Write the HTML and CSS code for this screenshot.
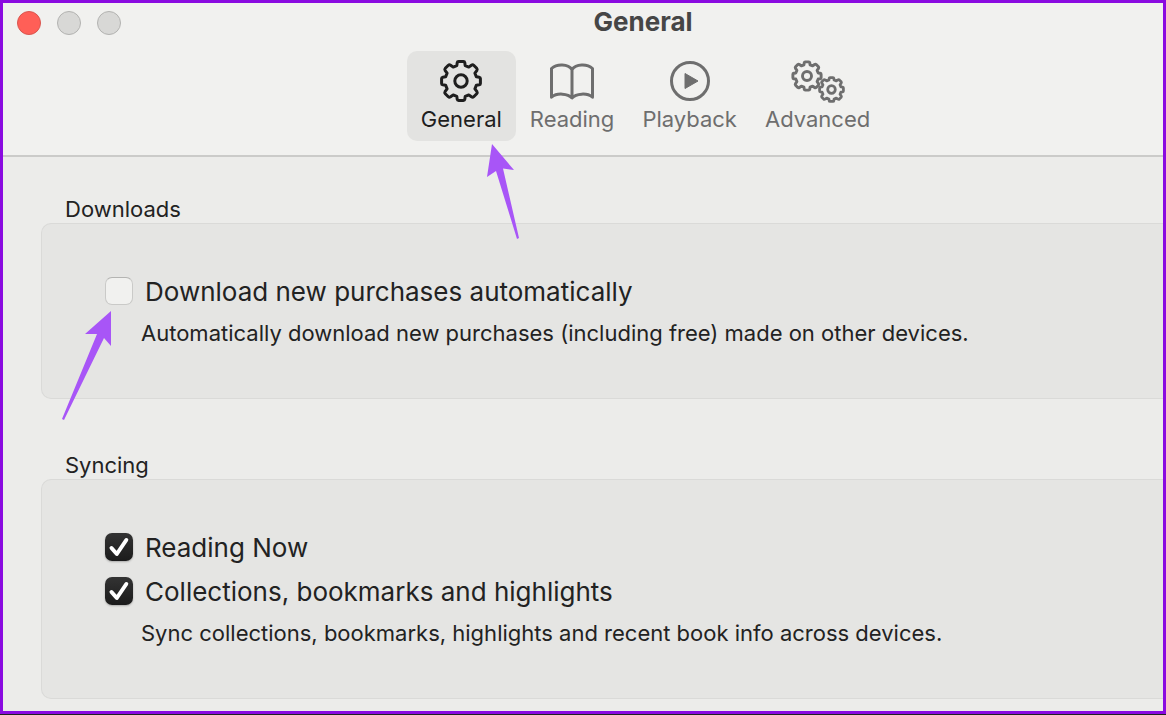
FILE: index.html
```
<!DOCTYPE html>
<html lang="en">
<head>
    <meta charset="UTF-8">
    <meta name="viewport" content="width=device-width, initial-scale=1.0">
    <title>General</title>
    <link rel="stylesheet" href="styles.css">
</head>
<body>
    <!-- Shared shapes -->
    <svg class="defs" aria-hidden="true">
        <symbol id="gear" viewBox="-22 -22 44 44">
            <path d="M-2.4 -19.4H2.4Q3.6 -19.4 3.8 -18.2L4.2 -15.4L7.8 -13.9L10.4 -15.8Q11.7 -16.6 12.7 -15.7L15.7 -12.7Q16.6 -11.7 15.8 -10.4L13.9 -7.8L15.4 -4.2L18.2 -3.8Q19.4 -3.6 19.4 -2.4V2.4Q19.4 3.6 18.2 3.8L15.4 4.2L13.9 7.8L15.8 10.4Q16.6 11.7 15.7 12.7L12.7 15.7Q11.7 16.6 10.4 15.8L7.8 13.9L4.2 15.4L3.8 18.2Q3.6 19.4 2.4 19.4H-2.4Q-3.6 19.4 -3.8 18.2L-4.2 15.4L-7.8 13.9L-10.4 15.8Q-11.7 16.6 -12.7 15.7L-15.7 12.7Q-16.6 11.7 -15.8 10.4L-13.9 7.8L-15.4 4.2L-18.2 3.8Q-19.4 3.6 -19.4 2.4V-2.4Q-19.4 -3.6 -18.2 -3.8L-15.4 -4.2L-13.9 -7.8L-15.8 -10.4Q-16.6 -11.7 -15.7 -12.7L-12.7 -15.7Q-11.7 -16.6 -10.4 -15.8L-7.8 -13.9L-4.2 -15.4L-3.8 -18.2Q-3.6 -19.4 -2.4 -19.4Z"/>
            <circle r="6.2"/>
        </symbol>
        <symbol id="tick" viewBox="0 0 28 28">
            <path d="M6.5 15L11.8 21L21.3 7"/>
        </symbol>
    </svg>

    <div class="window">
        <header class="toolbar">
            <div class="title-bar">
                <div class="lights">
                    <button class="light close" aria-label="Close"></button>
                    <button class="light" aria-label="Minimize"></button>
                    <button class="light" aria-label="Zoom"></button>
                </div>
                <h1>General</h1>
            </div>
            <nav class="tabs">
                <button class="tab active">
                    <svg class="icon" viewBox="0 0 44 44"><use href="#gear" width="44" height="44"/></svg>
                    General
                </button>
                <button class="tab">
                    <svg class="icon" viewBox="0 0 44 44">
                        <path d="M22 39C18 34.5 7 33.5 1.5 38.2V9.5C7 4.5 18 5 22 10.5C26 5 37 4.5 42.5 9.5V38.2C37 33.5 26 34.5 22 39ZM22 10.5V38"/>
                    </svg>
                    Reading
                </button>
                <button class="tab">
                    <svg class="icon" viewBox="0 0 44 44">
                        <circle cx="22" cy="22" r="18.5"/>
                        <path class="solid" d="M17 14.5V29.5L30 22Z"/>
                    </svg>
                    Playback
                </button>
                <button class="tab">
                    <svg class="icon wide" viewBox="0 0 56 44">
                        <use class="big" href="#gear" x="1" y="1" width="32" height="32"/>
                        <use class="small" href="#gear" x="28" y="17" width="27" height="27"/>
                    </svg>
                    Advanced
                </button>
            </nav>
        </header>

        <main>
            <section>
                <h2>Downloads</h2>
                <div class="panel">
                    <label class="option">
                        <span class="box">
                            <input type="checkbox" aria-describedby="download-note">
                            <svg class="tick"><use href="#tick"/></svg>
                        </span>
                        Download new purchases automatically
                    </label>
                    <p id="download-note">Automatically download new purchases (including free) made on other devices.</p>
                </div>
            </section>

            <section>
                <h2>Syncing</h2>
                <div class="panel">
                    <label class="option">
                        <span class="box">
                            <input type="checkbox" checked>
                            <svg class="tick"><use href="#tick"/></svg>
                        </span>
                        Reading Now
                    </label>
                    <label class="option">
                        <span class="box">
                            <input type="checkbox" aria-describedby="sync-note" checked>
                            <svg class="tick"><use href="#tick"/></svg>
                        </span>
                        Collections, bookmarks and highlights
                    </label>
                    <p id="sync-note">Sync collections, bookmarks, highlights and recent book info across devices.</p>
                </div>
            </section>
        </main>

        <!-- Pointer arrows -->
        <svg class="arrow arrow-tab" viewBox="0 0 34 96" aria-hidden="true">
            <path d="M6 0L28 26L17 24.5L33 94L31 95L10 27L1 33Z"/>
        </svg>
        <svg class="arrow arrow-check" viewBox="0 0 50 110" aria-hidden="true">
            <path d="M49 0V35L42 27L2 109L0 108L35 23L23 23Z"/>
        </svg>
    </div>
</body>
</html>
```

FILE: styles.css
```
* {
    box-sizing: border-box;
}
body {
    margin: 0;
    background: #222;
    color: #222;
    font-family: Inter, "Liberation Sans", sans-serif;
}
h1, h2, p {
    margin: 0;
}
button {
    border: none;
    padding: 0;
    background: none;
    font-family: inherit;
}
.defs {
    display: none;
}
.window {
    position: relative;
    min-height: calc(100vh - 1px);
    border: 3px solid #8a0ae0;
    background: #ececea;
}

/* Toolbar */
.toolbar {
    background: #f1f1ef;
    border-bottom: 2px solid #cbcbc9;
    padding-bottom: 14px;
}
.title-bar {
    display: grid;
    grid-template-columns: 120px 1fr;
    align-items: center;
    height: 40px;
}
.title-bar h1 {
    padding-bottom: 2px;
    font-size: 26px;
    line-height: 38px;
    text-align: center;
    color: #464646;
}
.lights {
    display: flex;
    gap: 16px;
    padding-left: 14px;
}
.light {
    width: 24px;
    height: 24px;
    border: 1px solid #b3b3b1;
    border-radius: 50%;
    background: #d8d8d6;
}
.light.close {
    background: #ff5f57;
    border-color: #d9564f;
}
.tabs {
    display: flex;
    justify-content: center;
    padding: 8px 0 0 125px;
}
.tab {
    display: flex;
    flex-direction: column;
    align-items: center;
    height: 90px;
    padding: 8px 14px;
    border-radius: 10px;
    font-size: 22px;
    line-height: 28px;
    color: #6e6e6e;
}
.tab.active {
    background: #e3e3e1;
    color: #1e1e1e;
}
.icon {
    width: 44px;
    height: 44px;
    margin-bottom: 2px;
    fill: none;
    stroke: currentColor;
    stroke-width: 3;
    stroke-linejoin: round;
}
.icon.wide {
    width: 56px;
}
.big {
    stroke-width: 4;
}
.small {
    stroke-width: 4.5;
}
.solid {
    fill: currentColor;
    stroke-width: 1;
}

/* Settings groups */
main {
    display: flex;
    flex-direction: column;
    gap: 52px;
    padding: 38px 0 12px 38px;
}
h2 {
    padding-left: 24px;
    font-size: 22px;
    font-weight: 400;
    line-height: 28px;
}
.panel {
    padding: 45px 0 51px 63px;
    border: 1px solid #dadad8;
    border-right: none;
    border-radius: 10px 0 0 10px;
    background: #e5e5e3;
}
.option {
    display: flex;
    align-items: center;
    gap: 12px;
    height: 44px;
    font-size: 26px;
}
.panel p {
    margin-top: 6px;
    padding-left: 36px;
    font-size: 22px;
    line-height: 28px;
}
.box {
    position: relative;
    width: 28px;
    height: 28px;
}
.box input {
    display: block;
    appearance: none;
    width: 28px;
    height: 28px;
    margin: 0;
    border: 1px solid #cacac8;
    border-top-color: #b4b4b2;
    border-radius: 7px;
    background: #f1f1ef;
}
.box input:checked {
    border: none;
    background: linear-gradient(#333, #1b1b1b);
    box-shadow: 0 1px 2px rgba(0, 0, 0, 0.25);
}
.tick {
    position: absolute;
    inset: 0;
    display: none;
    width: 28px;
    height: 28px;
    fill: none;
    stroke: #fff;
    stroke-width: 4;
    stroke-linecap: round;
    stroke-linejoin: round;
    pointer-events: none;
}
.box input:checked + .tick {
    display: block;
}

/* Arrows lie over the window */
.arrow {
    position: absolute;
    fill: #a855f7;
    pointer-events: none;
}
.arrow-tab {
    top: 141px;
    left: calc(50% - 97px);
    width: 34px;
    height: 96px;
}
.arrow-check {
    top: 308px;
    left: 59px;
    width: 50px;
    height: 110px;
}
```
